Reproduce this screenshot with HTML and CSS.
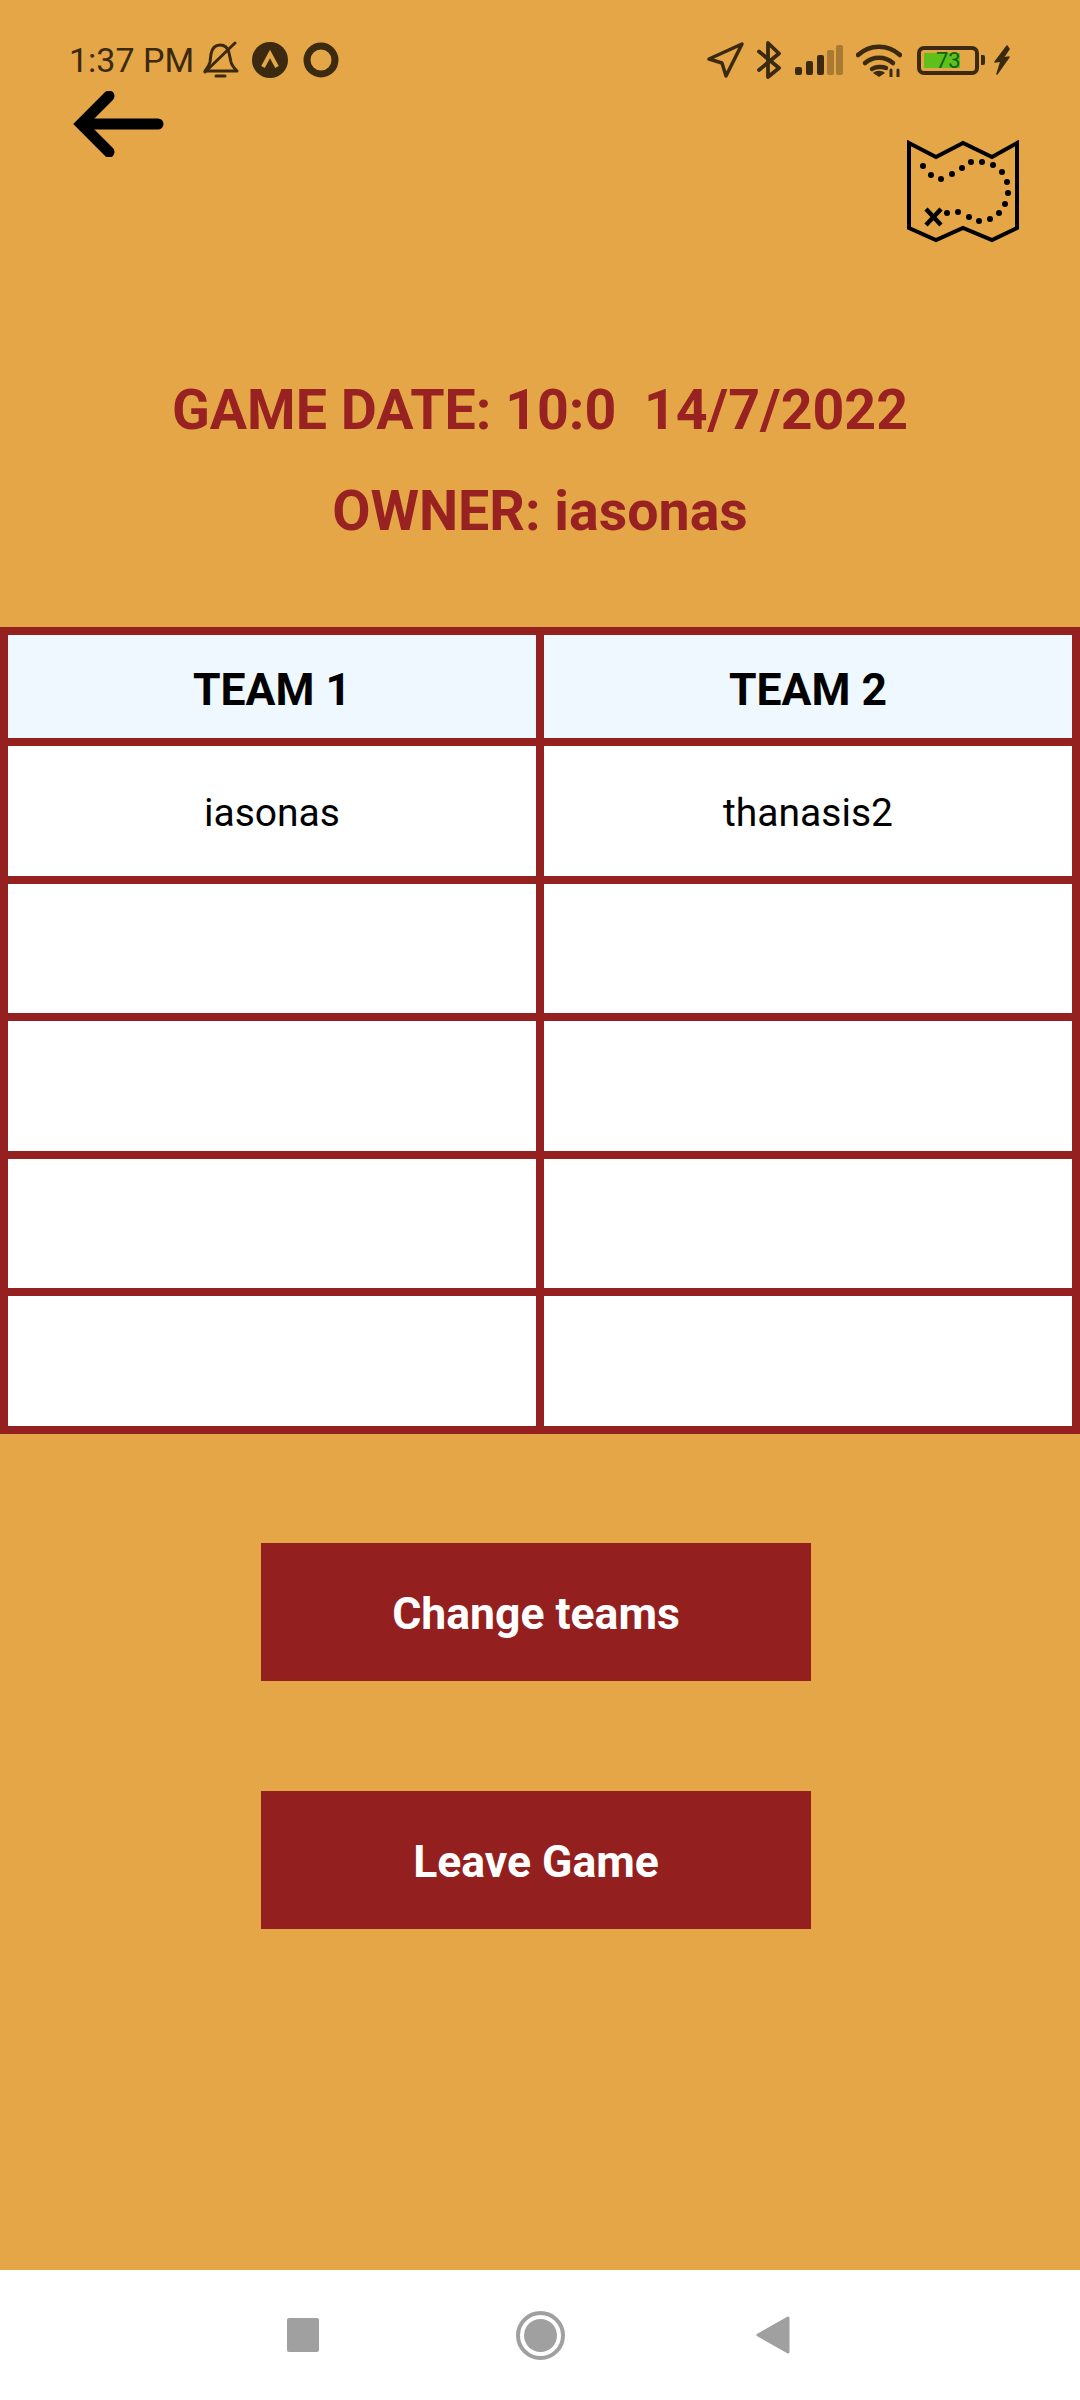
FILE: index.html
```html
<!DOCTYPE html>
<html>
<head>
	<meta charset="utf-8">
	<title>Game details</title>
	<link rel="stylesheet" href="styles.css">
</head>
<body>
	<div class="screen">
		<div class="status_bar">
			<div class="status_left">
				<span class="clock">1:37 PM</span>
				<svg class="ic_bell" width="36" height="38" viewBox="0 0 36 38" fill="none" stroke="#3b2a10" stroke-width="3" stroke-linecap="round" stroke-linejoin="round">
					<path d="M2 30h32c-3-3-5-5-6-9l-2-9c-1-5-4-8-9-8s-8 4-9 9l-1 8c-1 4-3 6-5 9z"/>
					<path d="M2 31L32 2"/>
					<path d="M13 35h9"/>
				</svg>
				<svg class="ic_round" width="36" height="36" viewBox="0 0 36 36">
					<circle cx="18" cy="18" r="18" fill="#3b2a10"/>
					<path d="M11 25l7-13 7 13" fill="none" stroke="#e5a746" stroke-width="4"/>
				</svg>
				<svg class="ic_ring" width="36" height="36" viewBox="0 0 36 36">
					<circle cx="18" cy="18" r="14" fill="none" stroke="#3b2a10" stroke-width="7"/>
				</svg>
			</div>
			<div class="status_right">
				<svg class="ic_nav" width="37" height="36" viewBox="0 0 37 36" fill="none" stroke="#3b2a10" stroke-width="3.5" stroke-linejoin="round">
					<path d="M2 17L35 2 19 34l-4-13z"/>
				</svg>
				<svg class="ic_bt" width="24" height="38" viewBox="0 0 24 38" fill="none" stroke="#3b2a10" stroke-width="3.8" stroke-linecap="round" stroke-linejoin="round">
					<path d="M2 10.500L22 27 11 36V2l11 10.500L2 29"/>
				</svg>
				<svg class="ic_signal" width="48" height="30" viewBox="0 0 48 30">
					<rect x="0" y="22" width="7" height="8" rx="2" fill="#3b2a10"/>
					<rect x="11" y="16" width="7" height="14" rx="2" fill="#3b2a10"/>
					<rect x="22" y="10" width="7" height="20" rx="2" fill="#3b2a10"/>
					<rect x="32" y="5" width="7" height="25" rx="2" fill="#a97a32"/>
					<rect x="41" y="0" width="7" height="30" rx="2" fill="#a97a32"/>
				</svg>
				<svg class="ic_wifi" width="46" height="34" viewBox="0 0 46 34" fill="none" stroke="#3b2a10" stroke-width="4.500" stroke-linecap="round">
					<path d="M2 12c12-11 30-11 42 0"/>
					<path d="M9 20c8-7 20-7 28 0"/>
					<path d="M16 26c3-2 10-3 14-1"/>
					<path d="M23 34l-6-4c3-3 9-3 12 0z" fill="#3b2a10" stroke="none"/>
					<path d="M35 27v7M42 27v7" stroke-width="3"/>
				</svg>
				<div class="battery">
					<div class="battery_body">
						<div class="battery_fill"></div>
						<span class="battery_num">73</span>
					</div>
					<div class="battery_nub"></div>
				</div>
				<svg class="ic_bolt" width="18" height="30" viewBox="0 0 18 30">
					<path d="M14 1L2 17l6-1-4 13 12-17-6 1 6-9z" fill="#3b2a10" stroke="#3b2a10" stroke-width="1.500" stroke-linejoin="round"/>
				</svg>
			</div>
		</div>

		<div class="top_row">
			<svg class="ic_back" width="91" height="66" viewBox="0 0 91 66" fill="none" stroke="#000" stroke-width="11" stroke-linecap="round">
				<path d="M85 33H10"/>
				<path d="M36 5L8 33l28 28"/>
			</svg>
			<svg class="ic_map" width="112" height="103" viewBox="0 0 112 103" fill="none" stroke="#000" stroke-width="4">
				<path d="M2 3l27 14 27-14 29 14 25-14v85l-25 12-29-12-27 12-27-12z"/>
				<g fill="#000" stroke="none">
					<circle cx="16" cy="26" r="3"/>
					<circle cx="24" cy="35" r="3"/>
					<circle cx="34" cy="39" r="3"/>
					<circle cx="45" cy="34" r="3"/>
					<circle cx="55" cy="28" r="3"/>
					<circle cx="64" cy="22" r="3"/>
					<circle cx="75" cy="22" r="3"/>
					<circle cx="86" cy="25" r="3"/>
					<circle cx="95" cy="32" r="3"/>
					<circle cx="100" cy="42" r="3"/>
					<circle cx="101" cy="53" r="3"/>
					<circle cx="98" cy="64" r="3"/>
					<circle cx="92" cy="73" r="3"/>
					<circle cx="83" cy="79" r="3"/>
					<circle cx="72" cy="81" r="3"/>
					<circle cx="62" cy="77" r="3"/>
					<circle cx="51" cy="72" r="3"/>
					<circle cx="40" cy="73" r="3"/>
				</g>
				<path d="M19 69l15 16M34 69L19 85" stroke-width="4.500"/>
			</svg>
		</div>

		<div class="titles">
			<div class="title_line">GAME DATE: 10:0&nbsp; 14/7/2022</div>
			<div class="title_line">OWNER: iasonas</div>
		</div>

		<div class="teams">
			<div class="cell cell_head">TEAM 1</div>
			<div class="cell cell_head">TEAM 2</div>
			<div class="cell">iasonas</div>
			<div class="cell">thanasis2</div>
			<div class="cell"></div>
			<div class="cell"></div>
			<div class="cell"></div>
			<div class="cell"></div>
			<div class="cell"></div>
			<div class="cell"></div>
			<div class="cell"></div>
			<div class="cell"></div>
		</div>

		<div class="actions">
			<button class="btn_action">Change teams</button>
			<button class="btn_action">Leave Game</button>
		</div>

		<div class="nav_bar">
			<div class="nav_square"></div>
			<div class="nav_home"><div class="nav_home_dot"></div></div>
			<svg class="nav_back" width="34" height="38" viewBox="0 0 34 38">
				<path d="M32 2v34L2 19z" fill="#a0a0a0" stroke="#a0a0a0" stroke-width="3" stroke-linejoin="round"/>
			</svg>
		</div>
	</div>
</body>
</html>
```

FILE: styles.css
```css
* {
	box-sizing: border-box;
}

body {
	margin: 0;
	font-family: Roboto, "Liberation Sans", sans-serif;
}

.screen {
	width: 1080px;
	height: 2400px;
	background-color: #e4a646;
	display: flex;
	flex-direction: column;
}

.status_bar {
	display: flex;
	justify-content: space-between;
	align-items: center;
	height: 40px;
	margin-top: 40px;
	padding-left: 69px;
	padding-right: 69px;
	color: #3b2a10;
}

.status_left,
.status_right {
	display: flex;
	align-items: center;
}

.clock {
	font-size: 34px;
	width: 134px;
}

.ic_round {
	margin-left: 13px;
}

.ic_ring {
	margin-left: 15px;
}

.ic_bt {
	margin-left: 13px;
}

.ic_signal {
	margin-left: 14px;
}

.ic_wifi {
	margin-left: 13px;
}

.battery {
	display: flex;
	align-items: center;
	margin-left: 15px;
}

.battery_body {
	position: relative;
	width: 62px;
	height: 29px;
	border: 4px solid #3b2a10;
	border-radius: 7px;
	padding: 3px;
}

.battery_fill {
	width: 36px;
	height: 100%;
	background-color: #5fc01c;
}

.battery_num {
	position: absolute;
	top: -2px;
	left: 15px;
	font-size: 22px;
	line-height: 25px;
	color: #14600f;
}

.battery_nub {
	width: 4px;
	height: 10px;
	margin-left: 2px;
	background-color: #3b2a10;
	border-radius: 0 2px 2px 0;
}

.ic_bolt {
	margin-left: 8px;
}

.top_row {
	display: flex;
	justify-content: space-between;
	align-items: flex-start;
	margin-top: 11px;
	padding-left: 73px;
	padding-right: 61px;
}

.ic_map {
	margin-top: 49px;
}

.titles {
	margin-top: 117px;
	text-align: center;
	color: #982222;
	font-size: 55.500px;
	font-weight: 700;
}

.title_line {
	height: 101px;
	line-height: 101px;
}

.teams {
	display: grid;
	grid-template-columns: 1fr 1fr;
	grid-template-rows: 103px repeat(5, 129.6px);
	gap: 8px;
	padding: 8px;
	margin-top: 65px;
	background-color: #952020;
}

.cell {
	display: flex;
	align-items: center;
	justify-content: center;
	padding-top: 5px;
	background-color: #fff;
	color: #000;
	font-size: 39px;
}

.cell_head {
	padding-top: 6px;
	background-color: #f0f8ff;
	font-weight: 700;
	font-size: 44.500px;
}

.actions {
	display: flex;
	flex-direction: column;
	align-items: flex-start;
	gap: 110px;
	margin-top: 109px;
	margin-left: 261px;
}

.btn_action {
	width: 550px;
	height: 138px;
	padding-top: 5px;
	border: none;
	background-color: #941f1f;
	color: #fff;
	font-family: Roboto, "Liberation Sans", sans-serif;
	font-size: 44.500px;
	font-weight: 700;
}

.nav_bar {
	display: flex;
	align-items: center;
	height: 130px;
	margin-top: auto;
	background-color: #fff;
	padding-left: 287px;
}

.nav_square {
	width: 32px;
	height: 34px;
	background-color: #a0a0a0;
	border-radius: 2px;
}

.nav_home {
	display: flex;
	align-items: center;
	justify-content: center;
	width: 49px;
	height: 49px;
	margin-left: 197px;
	border: 4px solid #a0a0a0;
	border-radius: 50%;
}

.nav_home_dot {
	width: 33px;
	height: 33px;
	background-color: #a0a0a0;
	border-radius: 50%;
}

.nav_back {
	margin-left: 191px;
}
```
